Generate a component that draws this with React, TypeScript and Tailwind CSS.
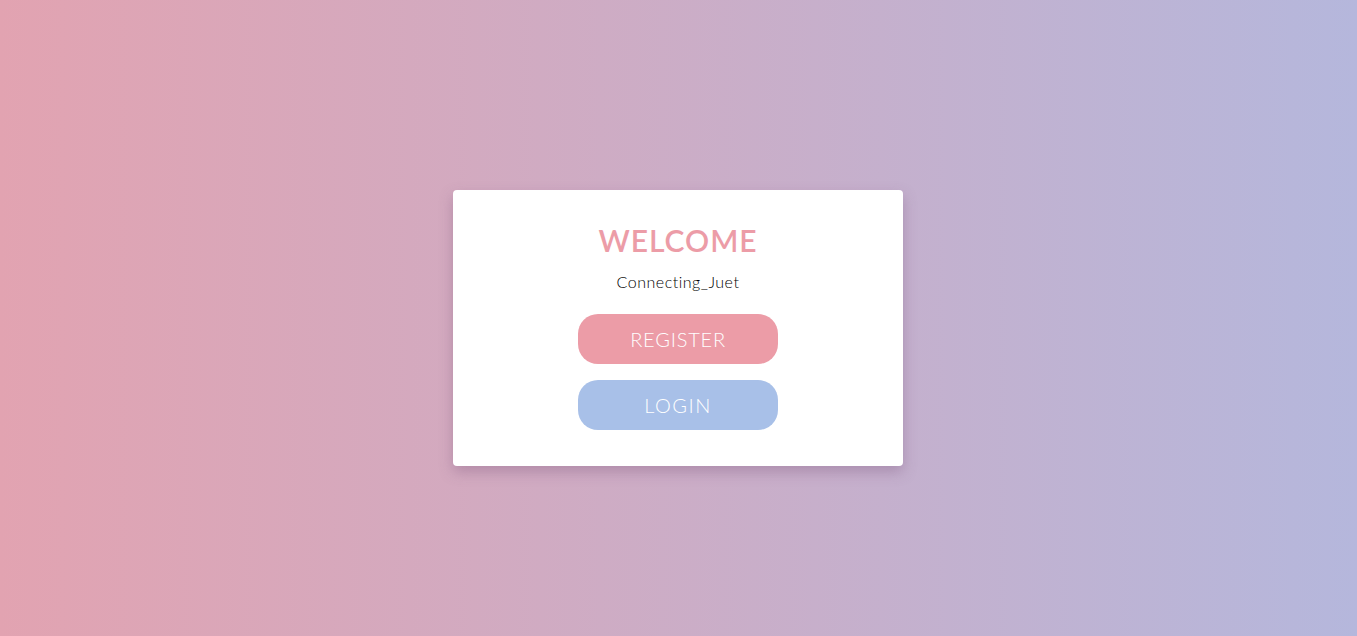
import React from "react";

export default function App() {
  return (
    <div
      className="w-full h-[636px] flex items-center justify-center pt-[20px] pr-[1px] bg-[linear-gradient(to_right,#e2a3b1,#b5b7dc)]"
      style={{ fontFamily: "Lato, 'Liberation Sans', sans-serif" }}
    >
      <div className="w-[450px] h-[276px] bg-white rounded-[4px] shadow-[0_6px_14px_rgba(120,80,120,0.35)] flex flex-col items-center pt-[30px]">
        <h1 className="text-[30px] leading-[40px] font-semibold text-[#ec9ca7] tracking-[1px]">WELCOME</h1>
        <p className="mt-[12px] text-[16px] leading-[20px] font-light text-black tracking-[0.5px]">Connecting_Juet</p>
        <button className="mt-[22px] w-[200px] h-[50px] rounded-[20px] bg-[#ec9ca7] text-white text-[20px] font-light tracking-[0.8px]">
          REGISTER
        </button>
        <button className="mt-[16px] w-[200px] h-[50px] rounded-[20px] bg-[#a8c0e8] text-white text-[20px] font-light tracking-[1.5px]">
          LOGIN
        </button>
      </div>
    </div>
  );
}
